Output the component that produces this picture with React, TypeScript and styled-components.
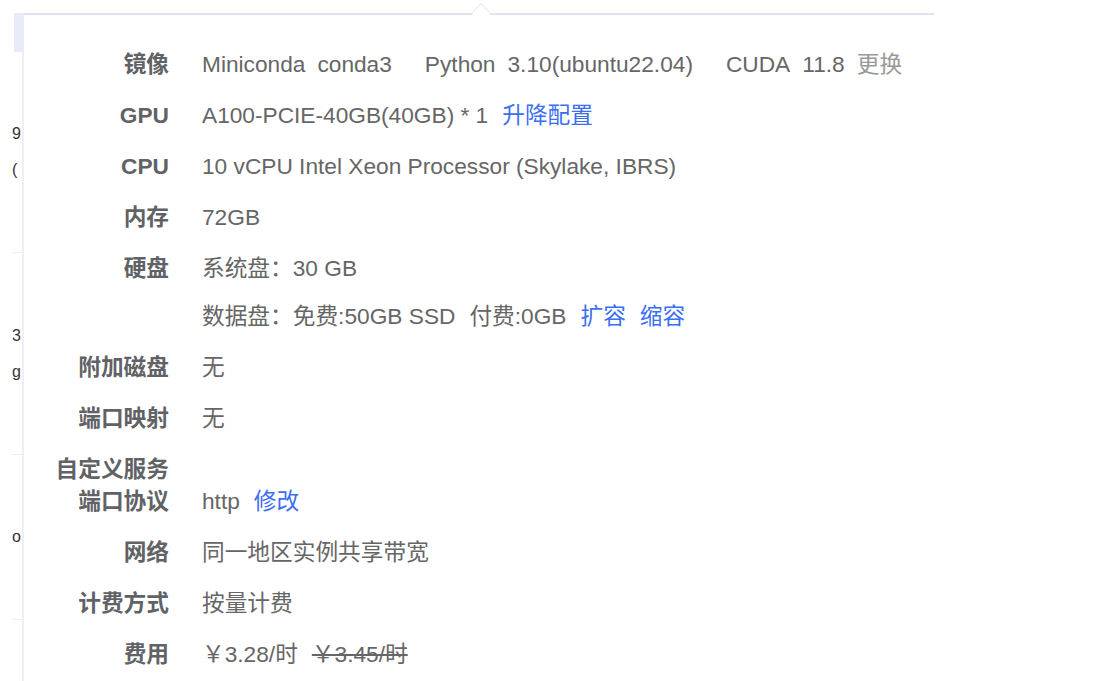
import React, { FC } from 'react';
import styled, { createGlobalStyle } from 'styled-components';

const GlobalStyle = createGlobalStyle`
    html, body {
        margin: 0;
        padding: 0;
        background: #ffffff;
    }
    body {
        font-family: 'Liberation Sans', 'Noto Sans CJK SC', sans-serif;
        overflow: hidden;
    }
`;

const Page = styled.div`
    display: flex;
    align-items: flex-start;
    padding-top: 13px;
    height: 681px;
    box-sizing: border-box;
`;

const SideTable = styled.div`
    width: 12px;
    margin-left: 12px;
    display: flex;
    flex-direction: column;
    background: #ffffff;
    box-shadow: inset -2px 0 0 #eef0f5;
    overflow: hidden;
`;

const SideHead = styled.div`
    height: 39px;
    margin-left: 2px;
    background: #e9ecf8;
`;

const SideCell = styled.div<{ $h: number }>`
    height: ${({ $h }) => $h}px;
    border-bottom: 1px solid #eceef2;
    display: flex;
    flex-direction: column;
    justify-content: center;
    gap: 10px;
    font-size: 16px;
    line-height: 26px;
    color: #333;
`;

const Card = styled.div`
    position: relative;
    width: 910px;
    min-height: 700px;
    background: #ffffff;
    border-top: 2px solid #e0e3f0;
    padding: 23.5px 0 0 25px;
    box-sizing: border-box;
    font-size: 22.7px;

    &::before {
        content: '';
        position: absolute;
        top: -9px;
        left: 450px;
        width: 13px;
        height: 13px;
        background: #ffffff;
        border-top: 1px solid #e8eaf3;
        border-left: 1px solid #e8eaf3;
        transform: rotate(45deg);
    }
`;

const Row = styled.div<{ $bottom?: boolean }>`
    display: flex;
    align-items: ${({ $bottom }) => ($bottom ? 'flex-end' : 'flex-start')};
    padding: 9.5px 0;
    line-height: 32px;
`;

const Label = styled.div`
    width: 120px;
    margin-right: 33px;
    flex-shrink: 0;
    text-align: right;
    font-weight: 700;
    color: #606266;
`;

const Value = styled.div`
    display: flex;
    flex-direction: column;
    gap: 16px;
    color: #666666;
`;

const Line = styled.div<{ $gap?: number }>`
    display: flex;
    align-items: center;
    gap: ${({ $gap }) => $gap ?? 14}px;
    white-space: nowrap;
`;

const Group = styled.span`
    display: inline-flex;
    gap: 12px;
`;

const Link = styled.span<{ $muted?: boolean }>`
    color: ${({ $muted }) => ($muted ? '#999999' : '#3b6ef5')};
    cursor: pointer;
`;

const Old = styled.span`
    text-decoration: line-through;
    color: #666666;
`;

const App: FC = () => {
    return (
        <>
            <GlobalStyle />
            <Page>
                <SideTable>
                    <SideHead />
                    <SideCell $h={200}>
                        <span>9</span>
                        <span>(</span>
                    </SideCell>
                    <SideCell $h={201}>
                        <span>3</span>
                        <span>g</span>
                    </SideCell>
                    <SideCell $h={164}>
                        <span>o</span>
                    </SideCell>
                    <SideCell $h={100} />
                </SideTable>
                <Card>
                    <Row>
                        <Label>镜像</Label>
                        <Value>
                            <Line $gap={33}>
                                <Group>
                                    <span>Miniconda</span>
                                    <span>conda3</span>
                                </Group>
                                <Group>
                                    <span>Python</span>
                                    <span>3.10(ubuntu22.04)</span>
                                </Group>
                                <Group>
                                    <span>CUDA</span>
                                    <span>11.8</span>
                                    <Link $muted>更换</Link>
                                </Group>
                            </Line>
                        </Value>
                    </Row>
                    <Row>
                        <Label>GPU</Label>
                        <Value>
                            <Line>
                                <span>A100-PCIE-40GB(40GB) * 1</span>
                                <Link>升降配置</Link>
                            </Line>
                        </Value>
                    </Row>
                    <Row>
                        <Label>CPU</Label>
                        <Value>
                            <Line>10 vCPU Intel Xeon Processor (Skylake, IBRS)</Line>
                        </Value>
                    </Row>
                    <Row>
                        <Label>内存</Label>
                        <Value>
                            <Line>72GB</Line>
                        </Value>
                    </Row>
                    <Row>
                        <Label>硬盘</Label>
                        <Value>
                            <Line $gap={0}>
                                <span>系统盘：</span>
                                <span>30 GB</span>
                            </Line>
                            <Line>
                                <span>数据盘：免费:50GB SSD</span>
                                <span>付费:0GB</span>
                                <Link>扩容</Link>
                                <Link>缩容</Link>
                            </Line>
                        </Value>
                    </Row>
                    <Row>
                        <Label>附加磁盘</Label>
                        <Value>
                            <Line>无</Line>
                        </Value>
                    </Row>
                    <Row>
                        <Label>端口映射</Label>
                        <Value>
                            <Line>无</Line>
                        </Value>
                    </Row>
                    <Row $bottom>
                        <Label>
                            自定义服务
                            <br />
                            端口协议
                        </Label>
                        <Value>
                            <Line>
                                <span>http</span>
                                <Link>修改</Link>
                            </Line>
                        </Value>
                    </Row>
                    <Row>
                        <Label>网络</Label>
                        <Value>
                            <Line>同一地区实例共享带宽</Line>
                        </Value>
                    </Row>
                    <Row>
                        <Label>计费方式</Label>
                        <Value>
                            <Line>按量计费</Line>
                        </Value>
                    </Row>
                    <Row>
                        <Label>费用</Label>
                        <Value>
                            <Line>
                                <span>￥3.28/时</span>
                                <Old>￥3.45/时</Old>
                            </Line>
                        </Value>
                    </Row>
                </Card>
            </Page>
        </>
    );
};

export default App;
